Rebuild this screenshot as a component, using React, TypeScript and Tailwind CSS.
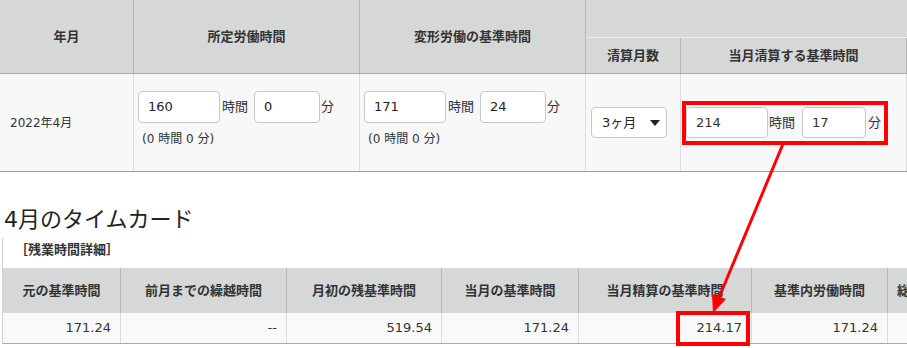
import React from "react"

const TH = "bg-[#d6d8d8] text-[13px] font-bold text-[#333] flex items-center justify-center"

function Box({ value, w }: { value: string; w: string }) {
  return (
    <div className={`${w} h-[32px] bg-white border border-[#c8c8c8] rounded-[4px] pl-[9px] flex items-center text-[13px] text-[#222]`}>
      {value}
    </div>
  )
}

function HourMin({ h, m }: { h: string; m: string }) {
  return (
    <div className="pl-[4px] pt-[17px]">
      <div className="flex items-center text-[13px] text-[#333]">
        <Box value={h} w="w-[82px]" />
        <span className="ml-[2px]">時間</span>
        <div className="ml-[6px]">
          <Box value={m} w="w-[66px]" />
        </div>
        <span className="ml-[1px]">分</span>
      </div>
      <p className="mt-[8px] ml-[4px] text-[12px] leading-[16px] text-[#333]">(0 時間 0 分)</p>
    </div>
  )
}

const detailCols = [
  { label: "元の基準時間", value: "171.24", w: "w-[118px]" },
  { label: "前月までの繰越時間", value: "--", w: "w-[166px]" },
  { label: "月初の残基準時間", value: "519.54", w: "w-[155px]" },
  { label: "当月の基準時間", value: "171.24", w: "w-[137px]" },
  { label: "当月精算の基準時間", value: "214.17", w: "w-[173px]" },
  { label: "基準内労働時間", value: "171.24", w: "w-[136px]" },
  { label: "総労働時間", value: "171.24", w: "w-[84px]" },
]

export default function App() {
  return (
    <div className="relative w-[907px] h-[348px] overflow-hidden bg-white font-['DejaVu_Sans','Noto_Sans_CJK_JP',sans-serif] text-[#333]">
      {/* 設定テーブル */}
      <div className="w-[1100px]">
        <div className="flex h-[74px] border-b border-[#a9a9a9]">
          <div className={`${TH} w-[134px] border-r border-[#b4b4b4]`}>年月</div>
          <div className={`${TH} w-[226px] border-r border-[#b4b4b4]`}>所定労働時間</div>
          <div className={`${TH} w-[226px] border-r border-[#b4b4b4]`}>変形労働の基準時間</div>
          <div className="flex flex-col w-[514px]">
            <div className="h-[38px] bg-[#d6d8d8] border-b border-[#ececec]" />
            <div className="flex flex-1">
              <div className={`${TH} w-[95px] border-r border-[#b4b4b4]`}>清算月数</div>
              <div className={`${TH} w-[226px] border-r border-[#b4b4b4]`}>当月清算する基準時間</div>
              <div className={`${TH} flex-1`} />
            </div>
          </div>
        </div>
        <div className="flex h-[98px] bg-[#f8f8f8] border-b border-[#9c9c9c]">
          <div className="w-[134px] border-r border-[#dcdcdc] flex items-center pl-[10px] text-[12px]">2022年4月</div>
          <div className="w-[226px] border-r border-[#dcdcdc]">
            <HourMin h="160" m="0" />
          </div>
          <div className="w-[226px] border-r border-[#dcdcdc]">
            <HourMin h="171" m="24" />
          </div>
          <div className="w-[95px] border-r border-[#dcdcdc] flex items-center pl-[5px]">
            <div className="w-[76px] h-[31px] bg-white border border-[#c8c8c8] rounded-[4px] flex items-center justify-between pl-[10px] pr-[6px] text-[13px] text-[#222]">
              <span>3ヶ月</span>
              <svg width="10" height="6" viewBox="0 0 10 6">
                <path d="M0 0 L10 0 L5 6 Z" fill="#222" />
              </svg>
            </div>
          </div>
          <div className="w-[226px] border-r border-[#dcdcdc] flex items-center pl-[1px]">
            <div className="flex items-center h-[44px] border-4 border-[#ff0000] pr-[3px] text-[13px]">
              <div className="w-[82px] h-[31px] bg-white border border-[#c8c8c8] rounded-[4px] pl-[9px] flex items-center">214</div>
              <span className="ml-[1px]">時間</span>
              <div className="ml-[7px] w-[64px] h-[31px] bg-white border border-[#c8c8c8] rounded-[4px] pl-[9px] flex items-center">17</div>
              <span className="ml-[2px]">分</span>
            </div>
          </div>
          <div className="flex-1" />
        </div>
      </div>

      {/* タイムカード */}
      <h2 className="mt-[33px] pl-[4px] text-[22px] leading-[30px] font-normal text-[#222]">4月のタイムカード</h2>
      <div className="mt-[3px] ml-[2px] border-l border-[#d0d0d0] w-[1100px]">
        <div className="h-[30px] pt-[3px] pl-[12px] text-[13px] leading-[18px] font-bold text-[#333]">［残業時間詳細］</div>
        <div className="flex h-[45px]">
          {detailCols.map((c) => (
            <div key={c.label} className={`${TH} ${c.w} shrink-0 border-r border-[#b8b8b8] whitespace-nowrap overflow-visible`}>{c.label}</div>
          ))}
        </div>
        <div className="flex h-[31px] bg-[#f9f9f9] border-b border-[#a9a9a9]">
          {detailCols.map((c) => (
            <div key={c.label} className={`${c.w} shrink-0 border-r border-[#dcdcdc] flex items-center justify-end pr-[9px] text-[13px] text-[#333]`}>
              {c.value}
            </div>
          ))}
        </div>
      </div>

      {/* 注釈 */}
      <div className="absolute left-[676px] top-[311px] w-[74px] h-[35px] border-4 border-[#ff0000]" />
      <svg className="absolute left-0 top-0 pointer-events-none" width="907" height="348">
        <line x1="783" y1="144" x2="718" y2="300" stroke="#ff0000" strokeWidth="3" />
        <polygon points="713,313 726,299 712,294" fill="#ff0000" />
      </svg>
    </div>
  )
}
